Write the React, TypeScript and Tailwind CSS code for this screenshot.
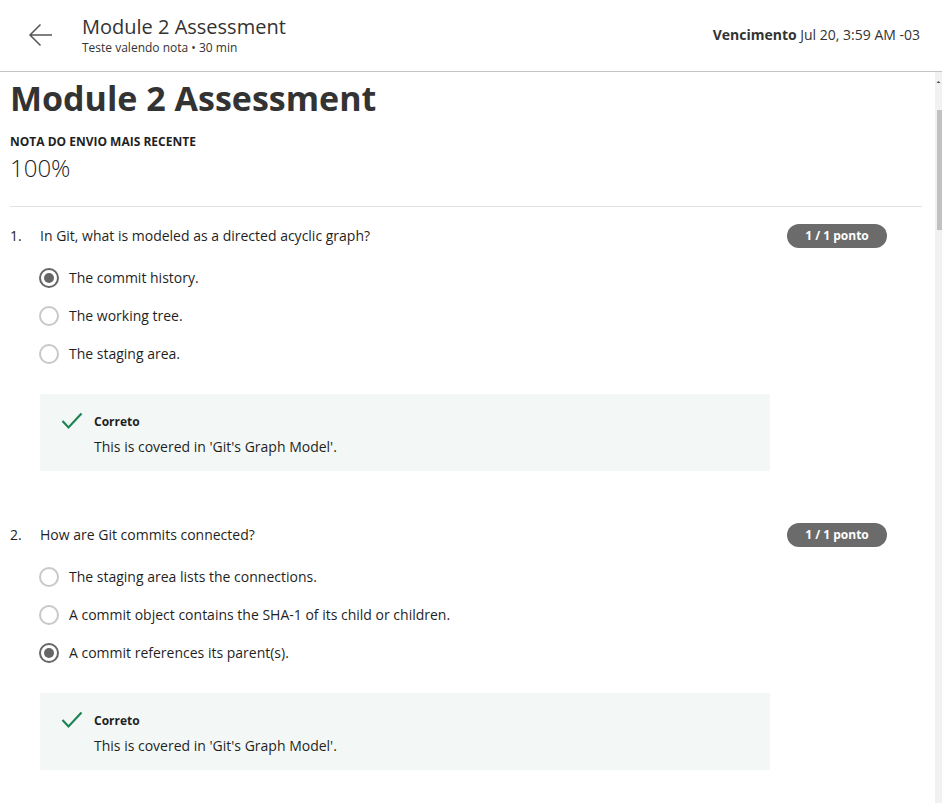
import React from 'react'

type Option = { text: string; checked?: boolean }
type Question = { n: number; prompt: string; options: Option[]; feedback: string }

const questions: Question[] = [
    {
        n: 1,
        prompt: 'In Git, what is modeled as a directed acyclic graph?',
        options: [{ text: 'The commit history.', checked: true }, { text: 'The working tree.' }, { text: 'The staging area.' }],
        feedback: "This is covered in 'Git's Graph Model'.",
    },
    {
        n: 2,
        prompt: 'How are Git commits connected?',
        options: [
            { text: 'The staging area lists the connections.' },
            { text: 'A commit object contains the SHA-1 of its child or children.' },
            { text: 'A commit references its parent(s).', checked: true },
        ],
        feedback: "This is covered in 'Git's Graph Model'.",
    },
]

function Radio({ checked }: { checked?: boolean }) {
    return checked ? (
        <span className="flex h-5 w-5 shrink-0 items-center justify-center rounded-full border-2 border-[#666666]">
            <span className="h-[10px] w-[10px] rounded-full bg-[#666666]" />
        </span>
    ) : (
        <span className="h-5 w-5 shrink-0 rounded-full border-2 border-[#c8c8c8]" />
    )
}

function QuestionBlock({ q }: { q: Question }) {
    return (
        <div className="pb-[53px]">
            <div className="flex items-start">
                <span className="w-[30px] shrink-0 text-sm leading-[22px]">{q.n}.</span>
                <p className="flex-1 text-sm leading-[22px]">{q.prompt}</p>
                <span className="mr-[35px] mt-[-1px] flex h-6 w-[100px] items-center justify-center rounded-full bg-[#6b6b6b] text-xs font-bold text-white">
                    1 / 1 ponto
                </span>
            </div>
            <div className="ml-[29px] mt-[20px] flex flex-col gap-[18px]">
                {q.options.map((o) => (
                    <label key={o.text} className="flex items-center gap-[10px] text-sm leading-5">
                        <Radio checked={o.checked} />
                        <span>{o.text}</span>
                    </label>
                ))}
            </div>
            <div className="ml-[30px] mt-[30px] flex w-[730px] gap-[11px] bg-[#f3f8f6] px-[21px] pb-[14px] pt-[20px]">
                <svg width="22" height="18" viewBox="0 0 22 18" className="mt-[-2px] shrink-0">
                    <polyline points="1.5,9 7.5,15.5 20.5,1.5" fill="none" stroke="#1f8354" strokeWidth="2.2" />
                </svg>
                <div>
                    <div className="text-xs font-bold leading-4">Correto</div>
                    <div className="mt-[7px] text-sm leading-5">{q.feedback}</div>
                </div>
            </div>
        </div>
    )
}

export default function App() {
    return (
        <div className="flex h-[803px] w-[942px] flex-col overflow-hidden bg-white text-[#1f1f1f]" style={{ fontFamily: '"Open Sans", "Liberation Sans", sans-serif' }}>
            <header className="flex h-[72px] shrink-0 items-center border-b border-[#c4c4c4] pb-[2px] pl-[28px] pr-[22px]">
                <svg width="25" height="24" viewBox="0 0 25 24" className="mt-[1px] shrink-0">
                    <path d="M24 12H2M12.5 1.5L2 12l10.5 10.5" fill="none" stroke="#555" strokeWidth="1.5" />
                </svg>
                <div className="ml-[29px] flex-1">
                    <div className="text-xl leading-[26px] text-[#333]">Module 2 Assessment</div>
                    <div className="text-xs leading-4 text-[#333]">Teste valendo nota • 30 min</div>
                </div>
                <div className="text-sm text-[#333]">
                    <span className="font-bold">Vencimento</span> Jul 20, 3:59 AM -03
                </div>
            </header>
            <div className="flex min-h-0 flex-1">
                <main className="flex-1 pl-[10px] pr-[13px]">
                    <h1 className="mt-[5px] text-[34px] font-bold leading-[42px] text-[#333]">Module 2 Assessment</h1>
                    <div className="mt-[15px] text-xs font-bold leading-4 text-[#1f1f1f]">NOTA DO ENVIO MAIS RECENTE</div>
                    <div className="mt-[2px] text-2xl font-light leading-8 text-[#1f1f1f]">100%</div>
                    <div className="mt-[22px] border-t border-[#e1e1e1]" />
                    <div className="pt-[18px]">
                        {questions.map((q) => (
                            <QuestionBlock key={q.n} q={q} />
                        ))}
                    </div>
                </main>
                <div className="flex w-[7px] shrink-0 flex-col bg-[#f1f1f1]">
                    <svg width="7" height="10" viewBox="0 0 7 10" className="mt-[4px]">
                        <polygon points="1.5,7 3.5,5 5.5,7" fill="#505050" />
                    </svg>
                    <div className="ml-[2px] mt-[24px] h-[120px] w-[5px] bg-[#c1c1c1]" />
                </div>
            </div>
        </div>
    )
}
